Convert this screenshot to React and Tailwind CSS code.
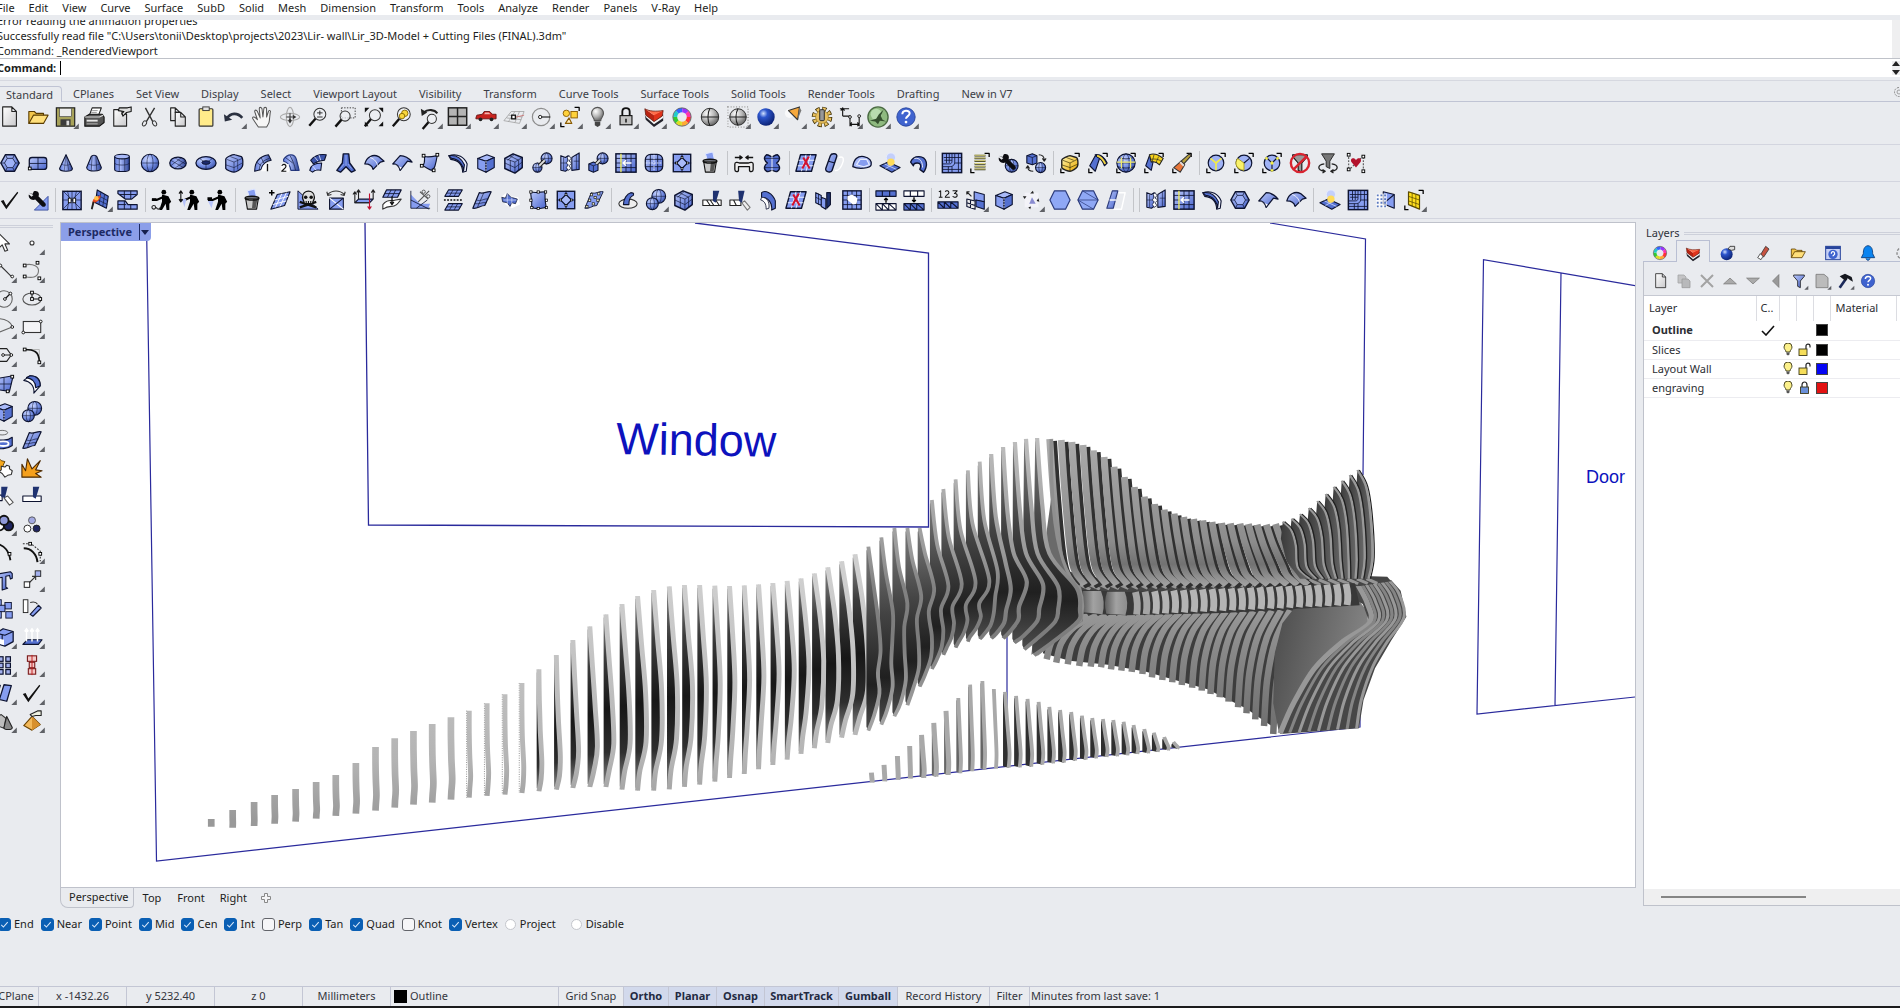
import React from "react";

const K = "#0d1330";
const BL = "#869df0";
const BM = "#5470d0";

/* ---------- shared gradients ---------- */
function Defs() {
  return (
    <svg width="0" height="0" className="absolute" aria-hidden="true">
      <defs>
        <linearGradient id="gb" x1="0" y1="0" x2="1" y2="1">
          <stop offset="0" stopColor="#bccafb" />
          <stop offset="1" stopColor="#4763cc" />
        </linearGradient>
        <linearGradient id="gh" x1="0" y1="0" x2="1" y2="0">
          <stop offset="0" stopColor="#5f7bdc" />
          <stop offset="0.4" stopColor="#a5b7f7" />
          <stop offset="1" stopColor="#2c4296" />
        </linearGradient>
        <radialGradient id="rb" cx="0.35" cy="0.3" r="0.8">
          <stop offset="0" stopColor="#cdd8ff" />
          <stop offset="0.5" stopColor="#7a94e8" />
          <stop offset="1" stopColor="#32489e" />
        </radialGradient>
        <radialGradient id="rd" cx="0.35" cy="0.3" r="0.8">
          <stop offset="0" stopColor="#cfe0ff" />
          <stop offset="0.3" stopColor="#2c55cc" />
          <stop offset="1" stopColor="#071a66" />
        </radialGradient>
        <radialGradient id="rg" cx="0.35" cy="0.3" r="0.8">
          <stop offset="0" stopColor="#ffffff" />
          <stop offset="0.5" stopColor="#b5b5b5" />
          <stop offset="1" stopColor="#555555" />
        </radialGradient>
        <linearGradient id="gy" x1="0" y1="0" x2="1" y2="1">
          <stop offset="0" stopColor="#fff6b0" />
          <stop offset="1" stopColor="#e8a800" />
        </linearGradient>
        <linearGradient id="gp" x1="0" y1="0" x2="1" y2="1">
          <stop offset="0" stopColor="#ffffff" />
          <stop offset="1" stopColor="#c9c9cc" />
        </linearGradient>
      </defs>
    </svg>
  );
}

const P = ({ d, f = "none", s = K, w = 1.2, ...r }) => (
  <path d={d} fill={f} stroke={s} strokeWidth={w} strokeLinejoin="round" {...r} />
);
const Sq = ({ x, y }) => <rect x={x - 1.5} y={y - 1.5} width="3" height="3" fill="#fff" stroke="#000" />;
const Br = () => <P d="M17 1.5h5v4M2 18v4.500h4" s="#000" w={1.4} />;

const ball = (cx, cy, r, f = "url(#rb)") => (
  <>
    <circle cx={cx} cy={cy} r={r} fill={f} stroke={K} strokeWidth="1.2" />
    <ellipse cx={cx} cy={cy} rx={r * 0.35} ry={r} fill="none" stroke={K} strokeWidth="0.6" />
    <path d={`M${cx - r} ${cy}h${2 * r}`} stroke={K} strokeWidth="0.6" />
  </>
);
const cube = (f = BL, g = "#a9baf8", h = BM) => (
  <>
    <P d="M3 7l10-4 8 3-9 4z" f={g} />
    <P d="M3 7l9 3v12l-9-4z" f={f} />
    <P d="M12 10l9-4v11l-9 5z" f={h} />
  </>
);
const lens = (x = 14, y = 9, r = 6) => (
  <>
    <P d={`M${x - r * 0.7} ${y + r * 0.7}L${x - r - 5} ${y + r + 6}`} s="#111" w={2.6} />
    <circle cx={x} cy={y} r={r} fill="#eef1f5" fillOpacity="0.7" stroke="#333" strokeWidth="1.1" />
  </>
);
const wrench = (
  <path d="M2 4l4 1.500 1.500-3C12 1 14 5 12.500 8l7 7c3 3-1 6-3.500 3.500l-7-7C5 13 1 10 2 6l3 2.500 2-2z" fill="#0c0c10" />
);
const bin = (
  <>
    <P d="M7 2l8-2 2 9H9z" f={BL} s="#dfe6ff" />
    <P d="M5 10h14l-2 12H7z" f="#c9c9c9" s="#111" />
    <path d="M13 11h5l-2 10h-4z" fill="#555" />
    <ellipse cx="12" cy="10" rx="7.500" ry="2" fill="none" stroke="#111" strokeWidth="1.600" />
  </>
);
const worker = (
  <>
    <circle cx="14" cy="3.500" r="2.600" fill="#000" />
    <path d="M12 6l7 2 3 6-2 2v7h-3l-1-7-4 7H9l3-9z" fill="#000" />
    <P d="M13 9L6 12H1" s="#000" w={2.2} />
  </>
);
const page = (x = 4, y = 1, w = 15, h = 21) => (
  <P d={`M${x} ${y}h${w - 5}l5 5v${h - 5}H${x}zM${x + w - 5} ${y}v5h5`} f="url(#gp)" s="#222" />
);
const funnel = (f) => <P d="M4 3h16v2l-6 7v10l-4-2v-8L4 5z" f={f} s="#111" />;

const ICONS = {
  new: page(),
  open: (
    <>
      <P d="M2 19V6h6l2 2h8v3" f="#f3c64a" s="#5a3c00" />
      <P d="M2 19l5-9h16l-5 9z" f="#ffdf7a" s="#5a3c00" />
    </>
  ),
  save: (
    <>
      <rect x="1.500" y="2" width="20" height="20" fill="#a7a25a" stroke="#222" strokeWidth="1.300" />
      <rect x="5" y="2.500" width="13" height="9" fill="#ececec" stroke="#444" strokeWidth="0.700" />
      <rect x="6" y="14.500" width="11" height="7" fill="#3c3c3c" />
      <rect x="12.500" y="16" width="3" height="5" fill="#ddd" />
    </>
  ),
  print: (
    <>
      <P d="M7 10l3-8h10l-3 8z" f="#fff" s="#222" />
      <P d="M2 12l5-3h14l2 3v6l-5 4H2z" f="#555" s="#111" />
      <P d="M2 12h16l4-2" s="#ddd" />
      <path d="M4 15h12v2H4z" fill="#e8e8e8" />
      <path d="M4 19h12v1H4z" fill="#bbb" />
      <P d="M10 5h6M9 7h6" s="#777" w={0.8} />
    </>
  ),
  props: (
    <>
      {page(3, 4, 14, 18)}
      <P d="M9 2h9l4-1v5l-5 1-4 4-1-3 2-2-6-1z" f="#ddd" s="#111" />
    </>
  ),
  cut: (
    <>
      <P d="M7 2l8 15M17 2L8 17" s="#333" w={1.5} />
      <ellipse cx="6" cy="19" rx="2" ry="3" fill="none" stroke="#333" transform="rotate(30 6 19)" />
      <ellipse cx="17" cy="19" rx="2" ry="3" fill="none" stroke="#333" transform="rotate(-30 17 19)" />
    </>
  ),
  copy: (
    <>
      {page(4, 2, 10, 14)}
      {page(9, 7, 11, 15)}
    </>
  ),
  paste: (
    <>
      <rect x="4.500" y="3" width="15" height="19" rx="1" fill="#ffeb8a" stroke="#333" strokeWidth="1.300" />
      <rect x="8.500" y="1" width="7" height="4" fill="#e2e2e2" stroke="#333" />
    </>
  ),
  undo: (
    <>
      <P d="M4 14C8 7 16 7 21 13" s="#2b3140" w={2.8} />
      <path d="M1 9l1 8 8-2z" fill="#2b3140" />
    </>
  ),
  hand: (
    <P d="M8 23L2 14c-1-2 1-3 3-1l2 2L4 6c0-2 2-2 3 0l3 7L9 3c0-2 2-2 3 0l1 9 1-9c0-2 3-2 3 0v9l2-6c1-2 3-1 2 1l-1 9c0 3-2 5-3 7z" f="#f6f6f6" s="#555" w={1.1} />
  ),
  orbit: (
    <>
      <ellipse cx="12" cy="12" rx="10.500" ry="4" fill="none" stroke="#aaa" strokeWidth="1.200" />
      <ellipse cx="12" cy="12" rx="4" ry="10.500" fill="none" stroke="#aaa" strokeWidth="1.200" />
      <P d="M12 8v8M8 12h7" s="#333" w={1.100} />
      <path d="M15 9.500l4 2.500-4 2.500zM10 16l2-3 2 3-2 3z" fill="#333" />
    </>
  ),
  zoompm: (
    <>
      {lens(14, 9, 6.500)}
      <P d="M11 7.500h6M14 5v5M11 12h6" s="#222" w={1} />
    </>
  ),
  zoomwin: (
    <>
      <rect x="7" y="2" width="15" height="11" fill="none" stroke="#333" strokeDasharray="1.500 1.500" />
      {lens(11, 11, 5.500)}
    </>
  ),
  zoomext: (
    <>
      {lens(13, 10, 6)}
      <path d="M2 2h5L2 7zM22 2h-5l5 5zM22 22h-5l5-5zM2 22v-5l4 5z" fill="#111" />
    </>
  ),
  zoomsel: (
    <>
      {lens(14, 9, 7)}
      <circle cx="15" cy="8" r="3.500" fill="#f8d63c" stroke="#8a6a00" />
      <circle cx="12" cy="11" r="3" fill="#f8d63c" stroke="#8a6a00" />
    </>
  ),
  zoomundo: (
    <>
      {lens(14, 14, 5)}
      <P d="M5 7c5-4 12-3 15 1" s="#222" w={2.200} />
      <path d="M2 3l1 8 6-4z" fill="#222" />
    </>
  ),
  views: (
    <>
      <rect x="1.500" y="2" width="20" height="19" fill="#b4b4b4" stroke="#222" strokeWidth="1.600" />
      <path d="M11.500 2v19M1.500 11.500h20" stroke="#222" strokeWidth="1.600" />
    </>
  ),
  car: (
    <>
      <P d="M1 13l1-3 6-1 2-3h6l3 3h4v5H1z" f="#c8231f" s="#5c0a0a" w={0.9} />
      <path d="M11 7h4l2 2h-7z" fill="#f4b5b0" />
      <circle cx="6" cy="14.500" r="2" fill="#222" />
      <circle cx="18" cy="14.500" r="2" fill="#222" />
    </>
  ),
  cplane: (
    <>
      <P d="M1 16L9 6h14l-5 13zM4 13l16 2M6 10l15 2M6 17l7-11M13 18l5-12" s="#9a9a9a" w={0.8} />
      <P d="M11 13l12-3" s="#c77" w={1} />
      <rect x="9.500" y="10" width="4" height="4" fill="#fff" stroke="#111" strokeWidth="1.400" />
    </>
  ),
  circ: (
    <>
      <circle cx="11" cy="12" r="9.500" fill="none" stroke="#8d8d8d" strokeWidth="1.300" />
      <P d="M11 12h10" s="#111" />
      <circle cx="10" cy="12" r="1.800" fill="#fff" stroke="#111" />
    </>
  ),
  sel: (
    <>
      <Br />
      <circle cx="8" cy="8" r="3.500" fill="#ffd23c" stroke="#8a5a00" />
      <rect x="13" y="6" width="7" height="7" fill="#ffd23c" stroke="#8a5a00" />
      <P d="M7 19l4-6 3 6z" f="#ffeec0" s="#8a5a00" />
    </>
  ),
  bulb: (
    <>
      <P d="M8 16c0-3-3-4-3-8a6.500 6.500 0 0 1 13 0c0 4-3 5-3 8z" f="url(#rg)" s="#555" />
      <path d="M8.500 17h6v4l-3 2-3-2z" fill="#444" />
    </>
  ),
  lock: (
    <>
      <P d="M8 11V6c0-5 8-5 8 0v5" s="#111" w={2} />
      <rect x="5.500" y="10.500" width="13" height="10" fill="#c2c2c2" stroke="#111" strokeWidth="1.200" />
      <path d="M12 14v4" stroke="#111" strokeWidth="1.600" />
    </>
  ),
  layer: (
    <>
      <path d="M2 10l1 5 9 8 10-7V9l-10 8z" fill="#23232c" />
      <path d="M2 8l10 9 10-7v3l-10 7-9-8z" fill="#f3f3f3" />
      <path d="M2 3l1 7 9 7V10z" fill="#b82412" />
      <path d="M12 9l10-4-1 6-9 6z" fill="#e0341c" />
      <path d="M2 3c5 3 12 3 20 2l-10 5z" fill="#ff6f4c" />
      <P d="M2 3c5 3 12 3 20 2l-1 6-9 6-9-7z" s="#5a140a" w={0.800} />
    </>
  ),
  wheel: (
    <>
      {["#f33", "#fa3", "#dd2", "#3c3", "#2cc", "#36f", "#93f", "#f3a"].map((c, i) => (
        <circle key={c} cx="12" cy="12" r="7.500" fill="none" stroke={c} strokeWidth="4.500" strokeDasharray="5.900 41.300" strokeDashoffset={-5.9 * i} />
      ))}
      <circle cx="12" cy="12" r="10" fill="none" stroke="#444" strokeWidth="0.800" />
    </>
  ),
  sphereg: (
    <>
      <circle cx="12" cy="12" r="9.500" fill="url(#rg)" stroke="#222" />
      <path d="M2.500 12h19M12 2.500c-3 5-3 14 0 19" stroke="#222" strokeWidth="1.200" fill="none" />
    </>
  ),
  spheredot: (
    <>
      <rect x="1" y="1" width="22" height="22" fill="none" stroke="#aaa" strokeWidth="2" strokeDasharray="1 2" />
      <circle cx="12" cy="12" r="9" fill="url(#rg)" stroke="#222" />
      <path d="M3 12h18M12 3c-3 5-3 13 0 18" stroke="#222" strokeWidth="1.200" fill="none" />
    </>
  ),
  sphereb: <circle cx="12" cy="12" r="9.500" fill="url(#rd)" />,
  spot: (
    <>
      <circle cx="7" cy="8" r="5" fill="#fff" opacity="0.700" />
      <P d="M6 5l12-4-2 14z" f="#f6a83c" s="#333" />
      <path d="M18 1l2 4-4 10z" fill="#777" />
    </>
  ),
  gear: (
    <>
      <circle cx="12" cy="12" r="8.500" fill="none" stroke="#3c2c00" strokeWidth="5.500" strokeDasharray="4.200 2.480" />
      <circle cx="12" cy="12" r="8.500" fill="none" stroke="#e8c060" strokeWidth="3.600" strokeDasharray="3 3.680" strokeDashoffset="-0.600" />
      <circle cx="12" cy="12" r="7" fill="#e8c060" stroke="#8a6a10" strokeWidth="0.600" />
      <rect x="9.500" y="4" width="5" height="12" rx="1" fill="#999" stroke="#222" />
    </>
  ),
  dims: (
    <>
      <P d="M4 2v9M1 3h10M4 11h8v8M12 17v5M22 12v10M12 20h10M2 5l2-3 2 3M14 18l-2 2 2 2M20 18l2 2-2 2" s="#111" />
      <circle cx="22" cy="11" r="1.500" fill="#fff" stroke="#111" />
      <circle cx="12" cy="12" r="1.500" fill="#fff" stroke="#111" />
    </>
  ),
  earth: (
    <>
      <circle cx="12" cy="12" r="11" fill="#8fba80" stroke="#4a6a42" strokeWidth="1.500" />
      <circle cx="10" cy="9" r="6" fill="#b8dcae" />
      <path d="M3 16l7-2 3-5 5-5-3 7 2 4 4 2-7-1-2 4-3-3z" fill="#35502f" />
    </>
  ),
  help: (
    <>
      <circle cx="12" cy="12" r="10" fill="#3f63cf" stroke="#28459c" />
      <P d="M8 9c0-5 8-5 8-1 0 3-4 3-4 6" s="#fff" w={2.200} />
      <circle cx="12" cy="17.500" r="1.500" fill="#fff" />
    </>
  ),
  hex3: (
    <>
      <P d="M7 3h10l5 9-5 9H7l-5-9z" f="url(#gb)" w={1.600} />
      <P d="M9 7h6l3 5-3 5H9l-3-5zM7 3l2 4M17 3l-2 4M22 12h-4M17 21l-2-4M7 21l2-4M2 12h4" f="#9fb2f7" w={0.800} />
    </>
  ),
  rrect: (
    <>
      <rect x="2.500" y="6" width="19" height="13" rx="3" fill="url(#gb)" stroke={K} strokeWidth="1.400" />
      <path d="M12 6v13M2.500 12.500h19" stroke={K} strokeWidth="0.900" />
      <Sq x={3} y={18} />
    </>
  ),
  cone: (
    <>
      <P d="M12 3l7 15c0 4-14 4-14 0z" f="url(#gh)" />
      <P d="M12 3l-2 18M12 3l3 17M7 13c2 2 8 2 10 0" w={0.500} />
    </>
  ),
  cone2: (
    <>
      <P d="M9 5c1-2 5-2 6 0l5 12c0 5-16 5-16 0z" f="url(#gh)" />
      <P d="M10 4L9 20M14 4l1 16M6 13c3 2 9 2 12 0" w={0.600} />
    </>
  ),
  cyl: (
    <>
      <P d="M4 5v14c0 3 16 3 16 0V5" f="url(#gh)" />
      <ellipse cx="12" cy="5" rx="8" ry="2.500" fill="#a9baf8" stroke={K} strokeWidth="1.200" />
      <P d="M4 12c0 3 16 3 16 0M9 7v14M15 7v14" w={0.600} />
    </>
  ),
  sphere: ball(12, 12, 9.500),
  ellip: (
    <>
      <ellipse cx="12" cy="12" rx="9" ry="6.500" fill="url(#gh)" stroke={K} strokeWidth="1.400" />
      <P d="M4 9l14 8M8 6l12 7M4 15L16 6M8 18l12-8" w={0.600} />
    </>
  ),
  torus: (
    <>
      <ellipse cx="12" cy="12" rx="11" ry="7" fill="url(#rb)" stroke={K} strokeWidth="1.400" />
      <ellipse cx="12" cy="11.500" rx="4.500" ry="2" fill="#1c2b6e" stroke={K} />
      <P d="M12 14v5M5 7l4 3M19 7l-4 3" w={0.600} />
    </>
  ),
  rbox: (
    <>
      <P d="M3 8c0-2 8-6 10-5l7 2c2 1 2 9 1 11-1 3-7 6-9 6s-8-2-9-4z" f="url(#gb)" w={1.400} />
      <P d="M4 8l8 3 9-4M12 11v11M8 5l8 3v11M3 14l9 3 9-5" w={0.600} />
    </>
  ),
  pipe1: (
    <>
      <P d="M4 21C4 12 8 5 19 3l3 6c-8 1-10 6-11 10z" f="url(#gh)" />
      <P d="M9 20c0-8 5-11 11-13M6 11l5 4M11 6l3 6" w={0.700} />
      <path d="M11 21c1-6 4-9 9-9v9z" fill="#fff" opacity="0.800" />
      <path d="M18 13v8" stroke="#111" strokeWidth="1.500" />
    </>
  ),
  pipe2: (
    <>
      <P d="M5 8c4-6 12-7 14 0l3 12H13C12 13 9 11 5 10z" f="url(#gh)" s="#26397f" />
      <P d="M12 4c3 5 5 10 6 16M7 6l8 6" w={0.700} />
      <path d="M2 13h9v9H2z" fill="#fff" opacity="0.800" />
      <P d="M3 15c2-3 6-1 4 2l-4 4h5" s="#111" w={1.300} />
    </>
  ),
  strips: (
    <>
      <P d="M4 9C9 3 14 2 21 3l-2 6c-5 0-9 2-12 4z" f="#3b53a8" />
      <P d="M3 20c1-6 5-8 13-8l-1 8c-4-1-7 0-9 2z" f={BL} />
      <P d="M8 5l4 5M13 3l2 6M6 15l4 5" s="#dfe6ff" w={0.900} />
    </>
  ),
  ypipe: (
    <>
      <P d="M9 2h6l1 10 6 8-4 2-6-6-6 6-4-2 6-8z" f={BM} w={1.500} />
      <P d="M12 3v12M6 18l4-5M18 18l-4-5" s="#a9baf8" w={0.800} />
    </>
  ),
  bent: (
    <>
      <P d="M2 13C4 5 11 2 17 5l6 5-4 1-8 8c-1-4-4-6-9-6z" f="url(#gb)" w={1.400} />
      <P d="M8 6c5 2 7 5 8 9" s="#fff" w={0.900} />
    </>
  ),
  bent2: (
    <>
      <P d="M2 13L10 4c5 0 9 2 13 7l-5-1-8 10c-1-4-3-7-8-7z" f="url(#gb)" w={1.400} />
      <P d="M2 13c5 0 7 3 8 7l2-3" f="#fff" w={0.900} />
    </>
  ),
  quad: (
    <>
      <P d="M6 5c5 1 9 0 14-1-2 7-1 11-5 16-4 0-6-3-11-5 3-3 2-6 2-10z" f="url(#gb)" />
      <Sq x={5} y={4} />
      <Sq x={20} y={3} />
      <Sq x={16} y={20} />
      <Sq x={3} y={15} />
    </>
  ),
  strip: (
    <>
      <P d="M2 4c10-3 17 2 20 9l-1 8-4 1c0-8-4-13-13-14z" f="#eef1ff" w={1.200} />
      <P d="M2 4c8-1 14 3 17 10l-1 7c0-7-5-13-13-14z" f={BM} w={1.200} />
    </>
  ),
  box: (
    <>
      {cube()}
      <path d="M12 10v11" stroke="#fff" strokeDasharray="1.500 1.500" />
    </>
  ),
  meshbox: (
    <>
      <P d="M2 7l9-5 10 4v11l-8 6-11-5z" f="url(#gb)" w={1.600} />
      <P d="M2 7l11 4 8-5M13 11v12M7 4l10 5v11M8 9v12M2 12l11 5 8-6M12 3l-7 6" w={0.700} />
    </>
  ),
  balls: (
    <>
      {ball(17, 7, 6)}
      {ball(7, 17, 5)}
      <path d="M9 15l6-6" stroke="#222" strokeWidth="4.500" />
      <path d="M9 15l6-6" stroke="#ddd" strokeWidth="2" />
    </>
  ),
  bridge: (
    <>
      <P d="M2 4l5 2 3-2v15l-3 2-5-1z" f="url(#gb)" />
      <P d="M22 1l-5 3-3 2v14l8-1z" f="url(#gb)" />
      <path d="M9 6l2-2 2 3-2 3 3 2-3 3 2 3-3 2-2-3 2-3-2-2 2-3z" fill="#fff" stroke={K} strokeWidth="0.800" />
      <P d="M2 12h6M16 10h6M19 3v16M5 6v14" w={0.600} />
    </>
  ),
  boxball: (
    <>
      {ball(17, 7, 6)}
      <P d="M2 13l5-2 5 2v7l-5 2-5-2z" f={BM} />
      <P d="M2 13l5 2 5-2M7 15v7" w={0.800} />
      <path d="M10 13l4-4" stroke="#222" strokeWidth="4" />
      <path d="M10 13l4-4" stroke="#ddd" strokeWidth="2" />
    </>
  ),
  gridarrow: (
    <>
      <rect x="1" y="2" width="22" height="20" fill="url(#gb)" stroke={K} strokeWidth="1.600" />
      <path d="M12 2v20M17.500 2v20M1 7h22M1 17h22M1 12h6" stroke={K} strokeWidth="0.900" />
      <path d="M6.500 2v20" stroke="#f4f05a" strokeWidth="1.400" />
      <path d="M18 12H9m3-3l-3 3 3 3" fill="none" stroke="#fff" strokeWidth="1.700" />
    </>
  ),
  rgrid: (
    <>
      <rect x="2.500" y="2.500" width="19" height="19" rx="6" fill="url(#gb)" stroke={K} strokeWidth="1.400" />
      <path d="M8 3v18M16 3v18M3 8h18M3 16h18" stroke={K} strokeWidth="0.900" />
      <path d="M12 3v18M3 12h18" stroke="#e7ecff" strokeWidth="1" strokeDasharray="2 1" />
    </>
  ),
  dia: (
    <>
      <rect x="2.500" y="2.500" width="19" height="19" fill={BL} stroke={K} strokeWidth="1.500" />
      <P d="M12 6l6 6-6 6-6-6zM12 2v3M12 19v3M2 12h3M19 12h3" f="#a9baf8" />
      {[[12, 6], [18, 12], [12, 18], [6, 12]].map(([x, y]) => (
        <rect key={`${x}-${y}`} x={x - 1} y={y - 1} width="2" height="2" fill="#fff" stroke="#000" strokeWidth="0.800" />
      ))}
    </>
  ),
  bin,
  comp: (
    <>
      <P d="M2 6h7M22 6h-7M7 4l3 2-3 2M17 4l-3 2 3 2" s="#111" w={1.500} />
      <P d="M2 13c0-2 3-2 5-1h10c2-1 5-1 5 1v6c0 3-4 3-4 1v-4H6v4c0 2-4 2-4-1z" f="#eee" s="#111" w={1.400} />
    </>
  ),
  peanut: (
    <>
      <P d="M6 3c3 0 4 2 6 2s3-2 6-2c4 3 2 7-1 9 3 2 5 6 1 9-3 1-4-1-6-1s-3 2-6 1c-4-3-2-7 1-9-3-2-5-6-1-9z" f={BM} w={1.500} />
      <path d="M12 1v22" stroke="#fff" />
      <P d="M4 7h16M4 17h16" w={0.700} />
    </>
  ),
  gridx: (
    <>
      <P d="M6 3h17l-5 18H1z" f={BL} w={1.500} />
      <P d="M4 9h17M3 15h17M12 3L7 21M17 3l-5 18" s="#fff" w={0.900} />
      <P d="M9 6l7 12M15 5L8 18" s="#d3122c" w={2.200} />
    </>
  ),
  caps: (
    <>
      <P d="M17 6c6-2 6 2 4 7s-4 8-8 7" s="#fff" w={1.500} />
      <P d="M8 4c1-3 8-3 7 1l-5 15c-1 3-8 2-7-2z" f="url(#gb)" w={1.500} />
      <P d="M6 10l7 2" />
    </>
  ),
  blob: (
    <>
      <P d="M2 16C3 8 7 4 14 5c6 1 9 5 8 9-1 4-14 5-20 2z" f="#a9baf8" w={1.400} />
      <P d="M6 14l4-6 7 0 3 6-6 2z" f={BL} s="#e7ecff" />
    </>
  ),
  sheetball: (
    <>
      <P d="M1 15l9-4 13 6-9 5z" f={BM} />
      <P d="M6 13l13 6M16 13l-9 5" s="#dfe6ff" w={0.800} />
      <circle cx="13" cy="6" r="5" fill="#c3cffb" stroke="#e6ebff" />
      <circle cx="13" cy="11" r="4" fill="#ffdc5a" />
    </>
  ),
  half: (
    <>
      <P d="M4 11C7 3 19 3 21 11c1 4-1 9-3 11l-4-3c2-4 1-7-3-7-2 0-4 1-4 3z" f={BM} w={1.500} />
      <P d="M8 7c6-1 9 3 9 10" s="#fff" w={0.900} />
    </>
  ),
  meshc: (
    <>
      <rect x="1.500" y="1.500" width="21" height="21" fill={BL} stroke={K} strokeWidth="1.600" />
      <P d="M12 2v8c0 2-1 3-3 3H2M15 2v9c0 3-2 5-5 5H2M19 2v20M2 19h20M9 2v10M6 2v10M3.500 9H12M3 6h9M15 12h8M12 16v6M8 16v6M12 6h11" w={0.900} />
    </>
  ),
  list: (
    <>
      <Br />
      <path d="M6 4h12M6 7h12M6 10h12M6 13h12M6 16h12M6 19h12" stroke="#33331a" strokeWidth="2" />
      <path d="M6 3.500h12M6 6.500h12M6 9.500h12M6 12.500h12M6 15.500h12M6 18.500h12" stroke="#f6ef8e" strokeWidth="1" />
    </>
  ),
  wball: (
    <>
      {ball(16, 15, 7)}
      {wrench}
    </>
  ),
  swap: (
    <>
      <P d="M2 4l6-2 5 2v8l-5 2-6-2z" f={BM} />
      <P d="M2 4l6 2 5-2M8 6v8" w={0.800} />
      {ball(17, 17, 5.500)}
      <P d="M15 3c4 0 6 2 6 6M9 21c-4 0-6-1-6-5M19 7l2 3 2-3M1 18l2-3 2 3" s="#222" />
    </>
  ),
  ybox: (
    <>
      <Br />
      <P d="M3 9c0-2 7-5 9-5l7 2c2 1 2 8 1 10s-6 5-8 5-8-2-9-4z" f="url(#gy)" s="#222" w={1.500} />
      <P d="M4 9l8 3 8-4M12 12v9M8 6l8 3M3 14l9 3 9-4" s="#332a00" w={0.700} />
    </>
  ),
  ybent: (
    <>
      <Br />
      <P d="M3 15L9 4l5 2-5 15z" f={BM} />
      <P d="M9 3c6-1 10 3 13 9l-3 3c-2-5-4-8-7-9z" f="#222b4a" />
      <path d="M11 4c4 1 7 5 9 9" stroke="#f6d840" strokeWidth="2" fill="none" />
    </>
  ),
  yball: (
    <>
      {ball(12, 12, 10)}
      <P d="M4 6c5 2 11 2 16 0M3 16c5 2 13 2 18 0" w={0.800} />
      <path d="M2 11h20M7 6v12M17 6v12" stroke="#f0ea70" strokeWidth="1.300" fill="none" />
      <Br />
    </>
  ),
  yflag: (
    <>
      <Br />
      <P d="M3 15L7 4l5 2-3 14z" f={BM} />
      <P d="M7 3c5-2 10 0 15 4l-4 7c-3-3-6-4-9-3z" f="#f6d21c" s="#222" />
      <P d="M12 3l-2 8M17 5l-3 7M8 8c5-1 9 0 12 2" s="#222" w={0.700} />
    </>
  ),
  brush: (
    <>
      <Br />
      <P d="M20 2l2 2-8 9-3-3z" f="#b9a23c" s="#333" />
      <P d="M11 10l4 4-5 8-7-5z" f="#e8763a" s="#333" />
      <P d="M10 11l4 4" s="#ddd" w={2} />
    </>
  ),
  yc1: (
    <>
      <Br />
      <circle cx="12" cy="12" r="8.500" fill="#9fb2f5" stroke={K} strokeWidth="1.300" />
      <path d="M12 20v-8L6 7M12 12l6-5" stroke="#f2ec4a" strokeWidth="1.800" fill="none" />
    </>
  ),
  yc2: (
    <>
      <Br />
      <circle cx="12" cy="12" r="8.500" fill="#9fb2f5" stroke={K} strokeWidth="1.300" />
      <path d="M12 20v-8L5 7c-4 6-1 12 7 13z" fill="#f9f26a" stroke="#a89a20" />
      <P d="M12 12l6-5" />
    </>
  ),
  yc3: (
    <>
      <Br />
      <circle cx="12" cy="12" r="8.500" fill="#9fb2f5" stroke={K} strokeWidth="1.300" />
      <P d="M12 20v-8L6 6M12 12l6-6" />
      <circle cx="12" cy="12" r="1.800" fill="#f2ec4a" />
      <circle cx="6" cy="7" r="1.500" fill="#f2ec4a" />
      <circle cx="18" cy="7" r="1.500" fill="#f2ec4a" />
      <circle cx="12" cy="20" r="1.500" fill="#f2ec4a" />
    </>
  ),
  nofilter: (
    <>
      {funnel("#999")}
      <circle cx="12" cy="12" r="10" fill="none" stroke="#d8232f" strokeWidth="2.600" />
      <path d="M5 19L19 5" stroke="#d8232f" strokeWidth="2.600" />
    </>
  ),
  loop: (
    <>
      <path d="M5 2h14l-5 8v8l-4-2v-6z" fill="#777" stroke="#222" />
      <P d="M8 13c-8 1-8 7 0 8M16 13c8 1 8 7 0 8M6 19l3 2-3 2M18 19l-3 2 3 2" s="#222" w={1.400} />
    </>
  ),
  heart: (
    <>
      <P d="M4 2v18L20 4v18" s="#555" strokeDasharray="2 1.500" />
      <path d="M12 17l-5-6c-2-4 3-6 5-2 2-4 7-2 5 2z" fill="#b3122c" />
      <Sq x={4} y={3} />
      <Sq x={4} y={19} />
      <Sq x={20} y={5} />
      <Sq x={20} y={21} />
    </>
  ),
  check: <path d="M2 13l3-1 3 6L20 3l1 1L8 22z" fill="#111" />,
  wtri: (
    <>
      <path d="M23 8v15H8z" fill={BL} stroke="#3a4fa0" />
      {wrench}
    </>
  ),
  pinch: (
    <>
      <rect x="2" y="2.500" width="20" height="20" fill={BL} stroke={K} strokeWidth="1.500" />
      <P d="M12 2v20M2 12h6M16 12h6M7 2l2 8-2 12M17 2l-2 8 2 12M2 2l20 20M22 2L2 22" w={0.700} />
      <rect x="8" y="10" width="3" height="5" fill="#fff" stroke="#111" />
      <rect x="13" y="10" width="3" height="5" fill="#fff" stroke="#111" />
    </>
  ),
  torch: (
    <>
      <P d="M9 1l12 7-2 13-12-6z" f={BM} />
      <P d="M13 3l-2 14M17 6l-2 13M8 6l13 7M8 11l12 6" w={0.700} />
      <path d="M3 21l1-8c1-4 6-5 9-6-1 4-3 7-7 8z" fill="#e8481c" />
      <circle cx="8" cy="10" r="2.500" fill="#ffc04a" />
      <P d="M3 22l2-8" w={2} s="#222" />
    </>
  ),
  gridcut: (
    <>
      <P d="M1 2h21v4l-6 5H9L1 5zM1 22h21v-5H12l-3-4H1z" f={BL} w={1.300} />
      <P d="M8 2v8M15 2v9M3 6h18M8 13v9M15 17v5M1 17h9" w={1} />
    </>
  ),
  work1: (
    <>
      {worker}
      <rect x="1" y="10" width="5" height="3" fill="#000" />
      <P d="M1 20a2 2 0 1 0 4 0a2 2 0 1 0-4 0M6 20a2 2 0 1 0 4 0" s="#222" />
    </>
  ),
  work2: (
    <>
      {worker}
      <path d="M3 11h5l-2 9z" fill="#b6c3fa" />
      <P d="M2 2v12M0 5l2-3 2 3M0 11l2 3 2-3" s="#111" />
    </>
  ),
  work3: (
    <>
      {worker}
      <path d="M1 13h6l-2 8z" fill="#b6c3fa" />
      <rect x="0.500" y="9" width="5" height="3" fill="#000" />
    </>
  ),
  addgrid: (
    <>
      <P d="M9 6l14-3-6 15-15 4z" f={BL} />
      <P d="M14 5L7 20M19 4l-7 15M6 12l15-4M4 17l15-4" s="#fff" w={1} />
      <P d="M3 1v6M0 4h6" s="#000" w={1.600} />
    </>
  ),
  skull: (
    <>
      <path d="M1 2v20h22z" fill={BL} stroke={K} />
      <P d="M3 20l18-6M3 14l18 6" s="#111" w={2.500} />
      <P d="M6 9c0-9 13-9 13 0 0 3-2 4-2 7h-9c0-3-2-4-2-7z" f="#ddd" s="#111" w={1.400} />
      <circle cx="9.500" cy="9" r="1.900" fill="#111" />
      <circle cx="15.500" cy="9" r="1.900" fill="#111" />
      <P d="M10 16v-3M12.500 16v-3M15 16v-3" s="#111" />
    </>
  ),
  rotbox: (
    <>
      <P d="M3 6c5-5 13-5 18 0M2 3l1 4 4-1M22 3l-1 4-4-1" s="#333" />
      <P d="M5 10h15v12H5z" f={BL} />
      <P d="M5 10l15 12" s="#fff" />
      <P d="M5 22L20 10" />
    </>
  ),
  arrows3: (
    <>
      <P d="M2 15l4-4h16l-4 4z" f={BL} />
      <P d="M2 15V4M6 11V2M22 11V2M0 6l2-3 2 3M4 4l2-3 2 3M20 4l2-3 2 3M2 15h16" s="#222" />
      <P d="M18 15v7M16 19l2 3 2-3M18 15V5" s="#c01030" w={1.200} />
    </>
  ),
  proj: (
    <>
      <P d="M6 1h16l-4 8H2z" f={BL} w={1.300} />
      <P d="M11 1L7 9M16 1l-4 8M4 5h16" w={0.900} />
      <P d="M2 17c6-7 8-3 14-5l6-1c-3 4-5 8-11 8-4 0-6 1-9 3z" f="#fff" s="#333" />
      <P d="M12 8v9M10 14l2 3 2-3" s="#111" w={1.400} />
    </>
  ),
  snipgrid: (
    <>
      <path d="M2 6l10 10h11l-2 5H2z" fill={BL} />
      <P d="M2 2v19h21M2 12l20 10M8 21l12-9" w={0.900} />
      <P d="M22 2L10 14M21 11L12 3" s="#555" w={1.200} />
      <circle cx="16" cy="3" r="1.800" fill="none" stroke="#555" />
      <circle cx="21" cy="8" r="1.800" fill="none" stroke="#555" />
    </>
  ),
  split: (
    <>
      <P d="M6 1h15l-4 7H2zM6 16h15l-4 7H2z" f={BL} />
      <P d="M11 1L7 8M16 1l-4 7M4 4.500h15M11 16l-4 7M16 16l-4 7M4 19.500h15" w={0.800} />
      <path d="M1 12h21" stroke="#111" strokeWidth="1.500" strokeDasharray="2 1.500" />
    </>
  ),
  sheet: (
    <>
      <P d="M9 4c5 2 8-2 13-1l-7 15c-5 0-8 4-13 3z" f="url(#gb)" w={1.300} />
      <P d="M14 4L7 20M6 12c5 2 8-2 13-1M4 16c5 1 8-2 13-1" w={0.700} />
    </>
  ),
  cross: (
    <>
      <path d="M2 9l6-5 5 4 8 1 2 8-9 4-7-4z" fill="#fff" />
      <P d="M3 9l4 1 2-5 4 4 7 2-2 5-4-1-2 4-3-4-5-1z" f={BM} w={0.800} />
      <P d="M9 5v12M14 9v8M5 12h14" s="#dfe6ff" w={0.700} />
    </>
  ),
  quad2: (
    <>
      <P d="M4 3c5 2 11 0 16 0-1 6 0 12 1 17-6 1-10 3-16 0 1-6-1-11-1-17z" f="url(#gb)" />
      {[[4, 3], [12, 3], [20, 3], [21, 12], [21, 20], [12, 21], [5, 20], [4, 12]].map(([x, y]) => (
        <rect key={`${x}-${y}`} x={x - 1} y={y - 1} width="2.500" height="2.500" fill="#fff" stroke="#000" strokeWidth="0.800" />
      ))}
    </>
  ),
  sheetdots: (
    <>
      <P d="M9 4c5 2 8-2 13-1l-7 15c-5 0-8 4-13 3z" f={BL} w={1} />
      {[[9, 6], [17, 5], [13, 9], [7, 12], [16, 12], [11, 16], [4, 19]].map(([x, y]) => (
        <rect key={`${x}-${y}`} x={x - 1} y={y - 1} width="2.500" height="2.500" fill="#f6f4d0" stroke="#222" strokeWidth="0.800" />
      ))}
    </>
  ),
  cowl: (
    <>
      <ellipse cx="12" cy="16" rx="10" ry="5" fill="#eee" stroke="#333" strokeWidth="1.200" />
      <P d="M7 17C7 11 11 5 15 4c4 0 4 3 1 4-3 2-3 5-3 9z" f={BM} w={1.200} />
    </>
  ),
  spheres: (
    <>
      {ball(15, 8, 7.500)}
      {ball(8, 16, 6.500)}
    </>
  ),
  cutbar: (
    <>
      <P d="M2 12h20v6H2zM6 12l4 6M10 12l4 6M16 12l4 6" f="#fff" s="#222" />
      <path d="M13 2h7l-4 13-3-2z" fill="#1f3270" />
    </>
  ),
  cutbar2: (
    <>
      <P d="M1 12h12v6H1zM5 12l3 6" f="#fff" s="#222" />
      <P d="M14 15l3-2 6 7-3 3z" f="#eee" s="#777" />
      <path d="M10 2h7l-3 13-3-2z" fill="#1f3270" />
    </>
  ),
  arcs: (
    <>
      <P d="M5 4c4-3 12 0 15 9v8l-4 2c1-8-4-14-11-14z" f={BM} />
      <P d="M5 9c6 0 9 5 8 12l-3 1c0-6-2-9-6-10z" f="#fff" w={0.900} />
    </>
  ),
  panels: (
    <>
      <P d="M3 4l6 3v11l-6-3zM9 9l5 2v11l-5-3z" f={BL} />
      <P d="M15 4h4v13l-4 4z" f="#1f3270" />
      <P d="M3 9l6 3M6 5v12" w={0.800} />
    </>
  ),
  ghole: (
    <>
      <rect x="2" y="2" width="20" height="20" fill={BL} stroke={K} strokeWidth="1.500" />
      <path d="M7 2v20M12 2v20M17 2v20M2 7h20M2 12h20M2 17h20" stroke={K} strokeWidth="0.900" />
      <path d="M7 8l5-2 6 4-1 6-4 1-6-5z" fill="#fff" />
    </>
  ),
  stk1: (
    <>
      <P d="M1 2h22v6H1zM8 2v6M16 2v6" f={BM} />
      <P d="M1 16h22v7H1zM1 16l7 7M8 16l7 7M15 16l8 7M8 16v7M15 16v7" f="#fff" />
      <P d="M12 15v-5M10 12l2-2 2 2" s="#000" w={1.500} />
    </>
  ),
  stk2: (
    <>
      <P d="M1 2h22v6H1zM8 2v6M16 2v6" f="#fff" />
      <P d="M1 16h22v7H1zM1 16l7 7M8 16l7 7M15 16l8 7M8 16v7M15 16v7" f={BM} />
      <P d="M12 9v5M10 12l2 2 2-2" s="#000" w={1.500} />
    </>
  ),
  n123: (
    <>
      <P d="M1 14h22v7H1zM1 14l7 7M8 14l7 7M15 14l8 7M8 14v7M15 14v7" f={BM} />
      <P d="M2 3l2-1v7M2 9h4M9 3c1-2 4-1 4 1s-4 3-4 5h5M17 2h5l-3 3c4 0 4 4 0 4l-2-1" s="#111" w={1.100} />
    </>
  ),
  grids: (
    <>
      <P d="M10 3l11 3v8l-11-2z" f={BL} />
      <P d="M12 12l9 2v8l-9-3z" f={BM} />
      <P d="M2 11l9 2v9l-9-3zM2 15l9 3M6 12v9" f="#eee" />
      <P d="M7 8L2 3M2 6V3h3" s="#222" />
    </>
  ),
  arr4: (
    <>
      <rect x="4" y="4" width="15" height="16" fill="#f3f3f8" />
      <path d="M9 16l3-7 4 7z" fill="#8a8cd0" />
      <path d="M10 5l3-3 1 3zM4 11l-2-3 4 0zM19 10l1 4-3-1zM8 20l3-1-1 3z" fill="#222" />
    </>
  ),
  hexf: <P d="M6 2h12l5 10-5 10H6L1 12z" f="#8fa8f5" s="#2b3a7a" w={1.300} />,
  hexl: (
    <>
      <P d="M6 2h12l5 10-5 10H6L1 12z" f="#8fa8f5" s="#2b3a7a" w={1.300} />
      <P d="M6 2l17 10M1 12h22M1 12l17 10" w={0.800} s="#2b3a7a" />
    </>
  ),
  card: (
    <>
      <P d="M15 4h7l-4 18H9" s="#fff" w={1.600} />
      <P d="M8 2h6L9 21H2z" f="url(#gb)" s="#2b3a7a" />
      <P d="M5 12h7" s="#fff" w={1.500} />
    </>
  ),
  dots: (
    <>
      <P d="M9 3l12 3v15l-12-5z" f={BL} />
      <P d="M9 16L21 6" />
      <path d="M1 5h12v16H1z" fill="#fff" opacity="0.700" />
      <path d="M3 6v15M7 6v15M11 6v15" stroke="#5b7ac0" strokeWidth="2" strokeDasharray="2 2" />
    </>
  ),
  ypanel: (
    <>
      <Br />
      <P d="M6 3l12 4v15L6 17z" f="#ffdf1c" s="#5a4a00" w={1.300} />
      <P d="M10 4v15M14 6v14M6 8l12 4M6 13l12 4" s="#5a4a00" w={0.800} />
    </>
  ),
  pointer: <P d="M6 1v17l4-4 3 7 3-1-3-7h5z" f="#fff" s="#333" />,
  dot: <circle cx="12" cy="12" r="2.200" fill="#fff" stroke="#333" strokeWidth="1.200" />,
  line: (
    <>
      <P d="M8 6l13 13" s="#333" />
      <circle cx="8" cy="6" r="1.500" fill="#fff" stroke="#111" />
      <circle cx="21" cy="18" r="1.500" fill="#fff" stroke="#111" />
    </>
  ),
  curve: (
    <>
      <P d="M4 18c8 2 14 1 15-5s-6-9-13-8" s="#777" />
      <Sq x={4} y={6} />
      <Sq x={4} y={18} />
      <Sq x={18} y={3} />
      <Sq x={20} y={20} />
    </>
  ),
  circr: (
    <>
      <circle cx="12" cy="12" r="9" fill="none" stroke="#666" strokeWidth="1.200" />
      <P d="M13 12l6-6" s="#111" />
      <circle cx="13" cy="12" r="1.500" fill="#fff" stroke="#111" />
      <circle cx="19" cy="6" r="1.500" fill="#fff" stroke="#111" />
    </>
  ),
  ellc: (
    <>
      <ellipse cx="12" cy="12" rx="10" ry="6.500" fill="none" stroke="#555" strokeWidth="1.200" />
      <P d="M12 6v6h9" s="#111" />
      <Sq x={12} y={5} />
      <Sq x={12} y={12} />
      <Sq x={21} y={12} />
    </>
  ),
  arc: (
    <>
      <P d="M6 3c8 0 14 4 15 9M21 12L6 18" s="#666" />
      <circle cx="21" cy="12" r="1.500" fill="#fff" stroke="#111" />
    </>
  ),
  rect: (
    <>
      <rect x="2.500" y="6" width="19" height="12" fill="#f4f4f6" stroke="#333" strokeWidth="1.200" />
      <circle cx="2.500" cy="18" r="1.500" fill="#fff" stroke="#111" />
      <circle cx="21.500" cy="6" r="1.500" fill="#fff" stroke="#111" />
    </>
  ),
  poly: (
    <>
      <P d="M6 5h9l5 7-5 7H6M11 12h9" s="#222" />
      <circle cx="11" cy="12" r="1.500" fill="#fff" stroke="#111" />
      <circle cx="20" cy="12" r="1.500" fill="#fff" stroke="#111" />
    </>
  ),
  fillet: (
    <>
      <P d="M4 6h16v13" s="#aaa" w={0.900} />
      <P d="M4 6c10 0 16 2 16 14" s="#111" w={1.800} />
      <Sq x={4} y={6} />
      <Sq x={20} y={20} />
    </>
  ),
  srf: (
    <>
      <P d="M4 6l18-3-4 17-14-2z" f="url(#gb)" />
      <P d="M12 5v14M4 12h16" w={0.800} />
      <Sq x={21} y={4} />
      <Sq x={16} y={20} />
    </>
  ),
  sweep: (
    <>
      <P d="M3 8l7-5c7 0 11 4 11 11l-7 8c1-8-4-13-11-14z" f="#fff" />
      <P d="M10 3c7 0 11 4 11 11l-5 2c0-6-4-10-10-11z" f={BM} />
    </>
  ),
  rings: (
    <>
      <ellipse cx="10" cy="4" rx="6" ry="2.500" fill="none" stroke="#666" />
      <P d="M2 10c5 3 14 3 19-1v9c-5 4-14 4-19 3z" f={BM} />
      <ellipse cx="11" cy="16" rx="6" ry="2.500" fill="none" stroke="#fff" strokeWidth="2" />
    </>
  ),
  puzzle: (
    <>
      <path d="M1 4l5-3 3 3 4 1-2 4 2 5-5 1-3-3-5 2z" fill="#f6a81c" stroke="#5a3c00" />
      <P d="M9 10l4 1 2-2 3 1v3l3 2-1 4-4 1-3 2-3-4-3-2 2-2z" f="#fff" s="#333" />
    </>
  ),
  burst: <P d="M1 22V8l4 7 2-13 5 11 9-9-5 10 7 1-7 3 6 4z" f="#f5a01c" s="#4a2800" />,
  trimr: (
    <>
      <P d="M2 11h8v6H2z" f="#fff" />
      <P d="M12 14l4-2 6 7-4 3z" f="#fff" s="#555" />
      <path d="M9 2h7l-3 12-4-1z" fill="#1f3270" />
    </>
  ),
  trim: (
    <>
      <P d="M2 12h20v6H2z" f="#fff" />
      <path d="M13 2h7l-4 13-3-2z" fill="#1f3270" />
    </>
  ),
  dots3: (
    <>
      <circle cx="7" cy="14" r="5" fill="#fff" stroke="#111" strokeWidth="2" />
      <circle cx="17" cy="14" r="5" fill="#1f2560" stroke="#111" strokeWidth="2" />
      <circle cx="12" cy="8" r="5" fill="#8f98d8" stroke="#111" strokeWidth="2" />
    </>
  ),
  dots3b: (
    <>
      <circle cx="7" cy="17" r="3.800" fill="#fff" stroke="#222" />
      <circle cx="17" cy="17" r="3.800" fill="#1f2560" stroke="#222" />
      <circle cx="12" cy="8" r="3.800" fill="#a3a9e2" stroke="#555" />
    </>
  ),
  crv1: (
    <>
      <P d="M5 3c8 3 12 7 14 18" s="#111" w={2} />
      <Sq x={18} y={14} />
    </>
  ),
  crv2: (
    <>
      <P d="M3 8c8 0 14 6 15 15" s="#111" w={2.200} />
      <P d="M2 3h9l10 8v11" s="#333" strokeDasharray="2 1.500" />
      <Sq x={10} y={3} />
      <Sq x={21} y={14} />
    </>
  ),
  text: <P d="M2 6l17-3 2 2v5l-2 1-1-4-4 1v12l2 1-6 2V9L6 10l-1 4z" f="url(#gb)" />,
  move: (
    <>
      <P d="M9 15l7-7M12 8h4v4" s="#333" />
      <rect x="3.500" y="14" width="6" height="6" fill="#fff" stroke="#111" />
      <rect x="15.500" y="2" width="6" height="6" fill="#a3b0ee" stroke="#222" />
    </>
  ),
  copies: (
    <>
      {[[2, 3], [13, 6], [6, 9], [2, 16], [14, 16]].map(([x, y]) => (
        <rect key={`${x}-${y}`} x={x} y={y} width="7" height="7" fill={BL} stroke={K} />
      ))}
    </>
  ),
  rot: (
    <>
      <rect x="2.500" y="3" width="5" height="14" fill="#fff" stroke="#222" />
      <P d="M10 6c4-1 7 0 8 2" s="#333" />
      <P d="M10 19L19 9l3 3-9 9z" f={BL} />
    </>
  ),
  bool: (
    <>
      <P d="M3 8l8-5 11 3v11l-9 5-10-3z" f={BL} w={1.400} />
      <P d="M3 8l10 2 9-4M10 10v10" />
      <path d="M6 14l6 1v6l-6-2z" fill="#fff" />
    </>
  ),
  ext: (
    <>
      <P d="M2 20l5-5h16l-4 5z" f={BM} />
      <path d="M6 17V4M12 17V4M18 17V4M4 6l2-3 2 3M10 6l2-3 2 3M16 6l2-3 2 3" stroke="#fff" strokeWidth="1.600" fill="none" />
    </>
  ),
  arr: (
    <>
      {[3, 10, 17].map((y) => [6, 14].map((x) => (
        <rect key={`${x}-${y}`} x={x} y={y} width="5" height="5" fill="#a3b0ee" stroke={K} strokeWidth="1.300" />
      )))}
    </>
  ),
  align: (
    <>
      {[[7, 2, 10], [9, 9, 6], [8, 16, 8]].map(([x, y, w]) => (
        <rect key={y} x={x} y={y} width={w} height="6" fill="#f4c8c8" stroke="#7a1a1a" strokeWidth="1.200" />
      ))}
      <path d="M12 1v22" stroke="#c01818" />
    </>
  ),
  bend: (
    <>
      <P d="M12 3l8 1-5 17-8-2z" f={BL} w={1.400} />
      <P d="M4 18L8 3" w={1.400} />
    </>
  ),
  solids: (
    <>
      <P d="M2 8l7-3 5 4-2 11-10-4z" f="#bdbdbd" s="#333" />
      <P d="M15 7l6 12c0 3-9 3-9 0z" f="#8a8a8a" s="#222" />
    </>
  ),
  pyr: (
    <>
      <P d="M12 7l9 9-9 6-9-5z" f="#f3b95a" s="#6a4200" />
      <path d="M12 7v15l9-6z" fill="#d8902c" />
      <P d="M10 5l8-4h4v5h-6l-4 1z" f="#eef0e0" s="#222" />
    </>
  ),
  bomb: (
    <>
      <circle cx="10" cy="14" r="9" fill="url(#rd)" />
      <P d="M12 6l3-4h7v5l-5 1z" f="#ddd" s="#222" />
    </>
  ),
  tube: (
    <>
      <P d="M16 2l5 4-8 12-5-3z" f="#c65240" s="#333" />
      <P d="M8 13l4 4-3 5-5-3z" f="#fff" s="#333" />
    </>
  ),
  winhelp: (
    <>
      <rect x="1" y="2" width="22" height="20" fill="#c5d0f6" stroke="#28459c" strokeWidth="1.500" />
      <rect x="1" y="2" width="22" height="4" fill="#28459c" />
      <circle cx="12" cy="14" r="7" fill="#3f63cf" />
      <P d="M9.500 13c0-4 5-4 5 0 0 2-2.500 2-2.500 4" s="#fff" w={1.800} />
    </>
  ),
  bell: <P d="M12 1c6 1 7 6 7 12l3 6H2l3-6c0-6 1-11 7-12zM9 20c1 4 5 4 6 0" f="#0a84f0" s="#0a3a78" w={1.300} />,
  cog: (
    <>
      <circle cx="12" cy="12" r="9" fill="none" stroke="#888" strokeWidth="2" strokeDasharray="4 2.200" />
      <circle cx="12" cy="12" r="4" fill="none" stroke="#888" strokeWidth="1.500" />
    </>
  ),
  copyg: (
    <g opacity="0.600">
      <P d="M3 3h9l3 3v9H3z" f="#aaa" s="#777" />
      <P d="M9 9h9l3 3v10H9z" f="#999" s="#666" />
    </g>
  ),
  xg: <P d="M3 3l18 18M21 3L3 21" s="#a3a3a3" w={3} />,
  up: <P d="M1 17L12 7l11 10z" f="#aaa" s="#777" />,
  down: <P d="M1 7l11 10L23 7z" f="#aaa" s="#777" />,
  left: <P d="M17 1v22L6 12z" f="#999" s="#777" />,
  funnelb: funnel("url(#gb)"),
  pageg: <P d="M3 2h12l6 5v15H3z" f="#bbb" s="#777" />,
  hammer: (
    <>
      <P d="M14 8L4 22" s="#1c2a5c" w={4} />
      <path d="M4 5l8-4 10 5 2 7-4-2-4-3-3 4-4-3z" fill="#16181f" />
    </>
  ),
};

function Icon({ n, fly, size = "size-6" }) {
  return (
    <svg viewBox="0 0 24 24" className={`${size} shrink-0 overflow-visible`} aria-hidden="true">
      {ICONS[n]}
      {fly && <path d="M26 19v6h-6z" fill="#5f6166" />}
    </svg>
  );
}

function Tool({ name }) {
  if (name === "|") {
    return (
      <span className="flex w-[6px] shrink-0 justify-center">
        <span className="h-6 w-px bg-[#c3c5c9]" />
      </span>
    );
  }
  const fly = name.endsWith("*");
  const n = fly ? name.slice(0, -1) : name;
  return (
    <button type="button" aria-label={n} className="flex h-7 w-7 shrink-0 items-center justify-center">
      <Icon n={n} fly={fly} size="size-[22px]" />
    </button>
  );
}

const ROW1 = "new open save* print props cut copy paste undo* hand orbit zoompm zoomwin zoomext zoomsel zoomundo* views* car* cplane* circ* sel* bulb* lock* layer* wheel* sphereg spheredot* sphereb* spot* gear* dims* earth* help*".split(" ");
const ROW2 = "hex3 rrect cone cone2 cyl sphere ellip torus rbox pipe1 pipe2 strips ypipe bent bent2 quad strip box meshbox balls bridge boxball gridarrow rgrid dia bin | comp peanut | gridx caps blob sheetball half | meshc list wball swap | ybox ybent yball yflag brush | yc1 yc2 yc3 nofilter loop heart".split(" ");
const ROW3 = "check wtri | pinch torch* gridcut | work1 work2 work3 | bin addgrid skull rotbox arrows3 proj snipgrid | split sheet cross quad2 dia sheetdots | cowl spheres* meshbox cutbar cutbar2 arcs gridx panels ghole | stk1 stk2 | n123 grids* box arr4* hexf hexl card | | bridge gridarrow strip hex3 bent2 bent | sheetball meshc dots ypanel*".split(" ");
const SIDE = "pointer dot* line* curve* circr* ellc* arc* rect* poly* fillet* srf* sweep* box* spheres* rings* sheet* puzzle burst trimr trim dots3* dots3b crv1 crv2* text move* copies rot bool* ext* arr* align* bend* check* solids* pyr*".split(" ");

function ToolRow({ items, label, className }) {
  return (
    <div role="toolbar" aria-label={label} className={`flex overflow-hidden border-b border-[#d3d5df] ${className}`}>
      <div className="-ml-1 flex shrink-0 items-center">
        {items.map((t, i) => (
          <Tool key={i} name={t} />
        ))}
      </div>
    </div>
  );
}

/* ---------- 3D model ---------- */
function smooth(pts) {
  let d = `M${pts[0][0].toFixed(1)} ${pts[0][1].toFixed(1)}`;
  for (let i = 0; i < pts.length - 1; i++) {
    const a = pts[Math.max(0, i - 1)];
    const b = pts[i];
    const c = pts[i + 1];
    const e = pts[Math.min(pts.length - 1, i + 2)];
    d += `C${[
      b[0] + (c[0] - a[0]) / 6, b[1] + (c[1] - a[1]) / 6,
      c[0] - (e[0] - b[0]) / 6, c[1] - (e[1] - b[1]) / 6,
      c[0], c[1],
    ].map((v) => v.toFixed(1)).join(" ")}`;
  }
  return d;
}
function lerpKeys(keys, x) {
  if (x <= keys[0][0]) return keys[0][1];
  for (let i = 1; i < keys.length; i++) {
    if (x <= keys[i][0]) {
      const [x0, a] = keys[i - 1];
      const [x1, b] = keys[i];
      const t = (x - x0) / (x1 - x0);
      return a.map((v, j) => (Array.isArray(v) ? v.map((q, k) => q + (b[j][k] - q) * t) : v + (b[j] - v) * t));
    }
  }
  return keys[keys.length - 1][1];
}

const LEFT = [[70, 957, 980], [118, 930, 983], [166, 906, 978], [212, 885, 971], [259, 867, 965], [305, 846, 956], [349, 825, 948], [394, 789, 941], [438, 741, 932], [481, 715, 923], [523, 693, 914], [565, 672, 908], [607, 652, 899], [648, 632, 893], [688, 610, 888], [728, 583, 884], [766, 549, 879], [804, 508, 874], [843, 465, 869], [880, 420, 864], [918, 379, 861], [954, 343, 861], [990, 312, 869], [1025, 288, 872], [1061, 270, 872], [1096, 259, 868], [1130, 255, 861], [1164, 255, 854], [1198, 257, 845], [1231, 258, 834], [1264, 256, 822], [1296, 253, 808], [1328, 249, 795], [1360, 243, 779], [1391, 235, 762], [1421, 220, 745], [1451, 202, 729], [1482, 184, 713], [1512, 163, 705]];
/* bulge at 25, 50, 75 and 90 percent of a slice's height */
const LEFT_KEYS = [
  [60, [0, 0, 0, 0]], [640, [0, 1, 3, 1]], [766, [0, 1, 4, 3]], [843, [2, 5, 9, 7]], [918, [6, 12, 17, 9]],
  [1025, [9, 18, 19, 5]], [1130, [9, 18, 15, 4]], [1200, [7, 12, 8, 3]], [1296, [7, 12, 6, 2]],
  [1391, [11, 18, 12, 4]], [1451, [15, 24, 22, 7]], [1530, [17, 28, 30, 12]],
];
const MID = [[74, 380, 932], [108, 352, 914], [142, 324, 889], [176, 324, 856], [208, 324, 800], [240, 240, 747], [270, 207, 705], [302, 178, 683], [334, 151, 665], [365, 125, 657], [395, 102, 655], [426, 81, 655], [457, 66, 668], [486, 57, 688], [515, 54, 706]];
/* ribbon points below each top: [dx, y] */
const MID_KEYS = [
  [74, [[12, 480], [26, 600], [32, 690], [25, 760], [29, 820], [14, 890]]],
  [142, [[12, 440], [34, 550], [26, 620], [27, 700], [30, 780], [16, 850]]],
  [208, [[14, 400], [38, 505], [24, 575], [32, 650], [30, 710], [14, 765]]],
  [270, [[14, 350], [48, 490], [24, 560], [28, 610], [22, 650], [8, 685]]],
  [334, [[12, 310], [56, 480], [30, 550], [34, 590], [22, 625], [6, 650]]],
  [426, [[12, 280], [28, 400], [62, 485], [42, 560], [40, 600], [14, 640]]],
  [486, [[14, 260], [30, 400], [84, 500], [84, 570], [76, 605], [30, 655]]],
  [515, [[14, 260], [32, 400], [104, 505], [112, 570], [106, 605], [42, 665]]],
];
const BACK = [[548, 57], [578, 60], [606, 66], [635, 75], [662, 91], [690, 111], [716, 140], [743, 171], [769, 201], [795, 230], [822, 252], [847, 269], [873, 281], [898, 291], [924, 297], [948, 301], [972, 306], [997, 309], [1020, 310], [1045, 311], [1067, 312], [1090, 314], [1114, 314], [1138, 312]];
const WING = [[1157, 305], [1180, 296], [1202, 282], [1225, 264], [1247, 243], [1269, 222], [1290, 200], [1311, 182], [1332, 165], [1352, 150]];
const FEET = [[540, 718], [565, 728], [595, 733], [625, 738], [655, 740], [682, 742], [708, 748], [735, 752], [762, 756], [790, 762], [815, 772], [842, 780], [868, 787], [893, 795], [920, 803], [945, 812], [968, 822], [992, 832], [1015, 845], [1040, 862], [1062, 880], [1085, 898], [1108, 918], [1132, 942]];
const FRONT = [[82, 1058, 1088], [115, 1035, 1084], [150, 1008, 1080], [182, 978, 1076], [213, 945, 1074], [245, 909, 1070], [277, 873, 1065], [309, 834, 1060], [340, 794, 1054], [372, 783, 1049], [402, 807, 1046], [431, 816, 1043], [460, 828, 1042], [490, 837, 1040], [519, 846, 1034], [547, 861, 1030], [575, 870, 1028], [604, 876, 1022], [632, 887, 1019], [659, 894, 1015], [687, 897, 1011], [714, 900, 1009], [741, 905, 1006], [767, 915, 1002], [795, 927, 1000], [820, 938, 996], [847, 951, 991], [871, 966, 986]];
const SWEEPS = 9;
const SWEEP_A = [[1350, 488], [1378, 550], [1384, 608], [1310, 668], [1240, 745], [1185, 850], [1150, 940]];
const SWEEP_B = [[1435, 482], [1460, 520], [1474, 590], [1430, 665], [1392, 740], [1362, 840], [1350, 925]];

function backPath([x, y]) {
  const m = x < 950 ? 22 : 22 + (x - 950) * 0.12;
  const h = 478 - y;
  return smooth([[x, y], [x + m * 0.4, y + h * 0.35], [x + m, y + h * 0.75], [x + m + 12, y + h * 0.93], [x + m + 40, 494]]);
}

function Model() {
  const left = LEFT.map(([x, t, b]) => {
    const k = lerpKeys(LEFT_KEYS, x);
    const h = b - t;
    const pts = [[x, t], [x + k[0], t + h * 0.25], [x + k[1], t + h * 0.5], [x + k[2], t + h * 0.75], [x + k[3], t + h * 0.9], [x, b]];
    return { d: smooth(pts), x, t, b };
  });
  const mid = MID.map(([x, t, b]) => {
    const k = lerpKeys(MID_KEYS, x).map(([dx, y]) => [x + dx, y]);
    const bx = x > 440 ? x - (x - 440) * 0.1 : x;
    return { d: smooth([[x, t], ...k, [bx, b]]), x, t, b, bx };
  });
  return (
    <>
      <defs>
        <linearGradient id="edge" gradientUnits="userSpaceOnUse" x1="0" y1="240" x2="0" y2="960">
          <stop offset="0" stopColor="#cfcfcf" />
          <stop offset="0.5" stopColor="#bdbdbd" />
          <stop offset="0.75" stopColor="#b4b4b4" />
          <stop offset="1" stopColor="#999999" />
        </linearGradient>
        <linearGradient id="edge2" gradientUnits="userSpaceOnUse" x1="0" y1="60" x2="0" y2="900">
          <stop offset="0" stopColor="#bdbdbd" />
          <stop offset="0.4" stopColor="#9a9a9a" />
          <stop offset="0.52" stopColor="#828282" />
          <stop offset="0.7" stopColor="#7c7c7c" />
          <stop offset="1" stopColor="#a2a2a2" />
        </linearGradient>
        <linearGradient id="face" x1="0" y1="0" x2="0" y2="1">
          <stop offset="0" stopColor="#8a8a8a" />
          <stop offset="0.25" stopColor="#3c3c3c" />
          <stop offset="0.55" stopColor="#171717" />
          <stop offset="0.8" stopColor="#2e2e2e" />
          <stop offset="1" stopColor="#8a8a8a" />
        </linearGradient>
        <linearGradient id="face2" x1="0" y1="0" x2="0" y2="1">
          <stop offset="0" stopColor="#7c7c7c" />
          <stop offset="0.4" stopColor="#444444" />
          <stop offset="0.75" stopColor="#202020" />
          <stop offset="1" stopColor="#4d4d4d" />
        </linearGradient>
        <linearGradient id="wing" x1="0" y1="0" x2="1" y2="0">
          <stop offset="0" stopColor="#3a3a3a" />
          <stop offset="1" stopColor="#6a6a6a" />
        </linearGradient>
        <linearGradient id="back" gradientUnits="userSpaceOnUse" x1="0" y1="50" x2="0" y2="500">
          <stop offset="0" stopColor="#acacac" />
          <stop offset="0.7" stopColor="#8c8c8c" />
          <stop offset="0.85" stopColor="#727272" />
          <stop offset="1" stopColor="#a5a5a5" />
        </linearGradient>
        <linearGradient id="leg" gradientUnits="userSpaceOnUse" x1="0" y1="570" x2="0" y2="900">
          <stop offset="0" stopColor="#989898" />
          <stop offset="0.5" stopColor="#848484" />
          <stop offset="1" stopColor="#727272" />
        </linearGradient>
        <linearGradient id="panel" x1="0" y1="0" x2="1" y2="0.300">
          <stop offset="0" stopColor="#4a4a4a" />
          <stop offset="1" stopColor="#858585" />
        </linearGradient>
        <linearGradient id="round" x1="0" y1="0" x2="1" y2="0">
          <stop offset="0" stopColor="#5e5e5e" />
          <stop offset="0.5" stopColor="#a2a2a2" />
          <stop offset="1" stopColor="#8c8c8c" />
        </linearGradient>
      </defs>

      <g transform="translate(180 500) scale(0.4464 0.3333)" fill="none">
        {left.slice().reverse().map((f) => (
          <g key={f.x}>
            {f.x > 780 && <path d={`${f.d}L${f.x - 5} ${f.b - 10}L${f.x - 5} ${f.t + 10}Z`} fill="url(#face)" />}
            {f.x > 640 && f.x <= 780 && <path d={`M${f.x - 6} ${f.t}V${f.b}`} stroke="#777" strokeWidth="2" strokeDasharray="3 4" />}
            <path d={f.d} stroke="url(#edge)" strokeWidth={f.x < 640 ? 15 : 11} />
          </g>
        ))}
      </g>

      <g transform="translate(840 420) scale(0.3827 0.3333)" fill="none">
        {/* lower legs */}
        <path d="M560 480L660 520L1190 565L1150 660L1130 920L1060 865L960 808L800 755L700 734L600 722L530 700L540 640Z" fill="#3d3d3d" />
        {FEET.map(([x, y], i) => {
          const sx = 648 + i * 24;
          const sy = 586 - i * 0.7;
          const h = y - sy;
          return <path key={x} d={smooth([[sx, sy], [sx - (sx - x) * 0.55, sy + h * 0.25], [x + (sx - x) * 0.12, sy + h * 0.6], [x, y]])} stroke="url(#leg)" strokeWidth="17" />;
        })}
        {/* inner panel */}
        <path d="M1185 567L1355 540L1378 575L1380 612L1305 668L1240 742L1190 830L1147 938L1132 850L1136 700L1156 610Z" fill="url(#panel)" />
        {/* curled right end */}
        <path d="M1300 470L1440 480L1465 512L1480 590L1440 662L1398 745L1368 840L1356 925L1150 942L1185 850L1240 745L1310 668L1384 608L1366 552L1330 530Z" fill="#474747" />
        {Array.from({ length: SWEEPS }, (_, k) => {
          const t = k / (SWEEPS - 1);
          const pts = SWEEP_A.map(([x, y], j) => [x + (SWEEP_B[j][0] - x) * t, y + (SWEEP_B[j][1] - y) * t]);
          return <path key={k} d={smooth(pts)} stroke={k % 2 ? "#848484" : "#989898"} strokeWidth={k === 0 ? 14 : 8} />;
        })}
        {/* seat top */}
        <path d="M540 440L700 480L900 470L1200 462L1430 470L1440 484L1360 498L1000 512L760 522L640 518Z" fill="#454545" />
        {Array.from({ length: 31 }, (_, i) => {
          const x = 640 + i * 25;
          const y = 500 - i * 0.6;
          return <path key={i} d={`M${x - 14} ${y - 6}L${x + 14} ${y + 8}`} stroke="#959595" strokeWidth="9" />;
        })}
        {/* backrest */}
        {BACK.map((p) => (
          <path key={p[0]} d={backPath(p)} stroke="#303030" strokeWidth="20" transform="translate(9 6)" />
        ))}
        {BACK.map((p) => (
          <path key={p[0]} d={backPath(p)} stroke="url(#back)" strokeWidth="18" />
        ))}
        {WING.map(([x, y], i) => {
          const ex = 1228 + i * 17;
          const mx = x + 34;
          const h = 476 - y;
          const d = smooth([[x, y], [x + 22, y + h * 0.15], [mx, y + h * 0.42], [Math.min(mx + 5, ex + 10), y + h * 0.8], [ex, 476]]);
          return { d, x, y, h, ex };
        }).reverse().map(({ d, x, y, h, ex }) => (
          <g key={x}>
            <path d={`${d}L${ex - 26} 476L${x + 10} ${y + h * 0.7}L${x - 5} ${y + h * 0.3}Z`} fill="url(#wing)" />
            <path d={d} stroke="#999999" strokeWidth="6" />
            <path d={d} stroke="#1f1f1f" strokeWidth="3" transform="translate(5 0)" />
          </g>
        ))}
        {/* seat front band */}
        <path d="M600 508L750 516L1000 506L1345 490L1358 556L1180 568L1000 579L750 586L600 580Z" fill="#383838" />
        <path d="M634 513h48q12 34 4 70l-50-6z" fill="url(#round)" />
        <path d="M698 515h46q12 34 2 70l-50-4q-8-34 2-66z" fill="url(#round)" />
        {Array.from({ length: 23 }, (_, i) => {
          const x = 775 + i * 25;
          return <path key={i} d={`M${x - 3} ${516 - i * 1.1}q8 34 3 ${68 - i * 0.2}`} stroke={i < 2 ? "#a5a5a5" : "#b4b4b4"} strokeWidth="18" />;
        })}
        {/* left and middle slices */}
        <path d="M556 200Q560 430 630 505L634 604L548 668L500 704L520 500Z" fill="#6a6a6a" />
        <path d="M552 58Q548 430 626 505Q640 555 628 602L514 704" stroke="#8f8f8f" strokeWidth="9" />
        {mid.slice().reverse().map((f) => (
          <g key={f.x}>
            <path d={`${f.d}L${f.bx - 5} ${f.b - 12}L${f.x - 5} ${f.t + 12}Z`} fill="url(#face2)" />
            <path d={f.d} stroke="url(#edge2)" strokeWidth={f.x > 380 ? 11 : 10} />
          </g>
        ))}
        {/* small front slices */}
        {FRONT.map(([x, t, b]) => {
          const k = x < 200 ? 2 : x < 430 ? 7 : 12;
          const h = b - t;
          const d = smooth([[x, t], [x + k * 0.5, t + h * 0.4], [x + k, t + h * 0.8], [x + k * 0.8, b]]);
          return (
            <g key={x}>
              {x > 200 && x !== 402 && <path d={`${d}L${x - 5} ${b - 4}L${x - 5} ${t + 8}Z`} fill={x < 430 ? "#666666" : "#303030"} />}
              <path d={d} stroke="#a9a9a9" strokeWidth={x < 300 ? 13 : 10} />
            </g>
          );
        })}
      </g>
    </>
  );
}

function Viewport() {
  return (
    <div className="relative min-h-0 flex-1 overflow-hidden border border-[#bfc2cb] bg-white">
      <svg viewBox="61 223 1574 664" preserveAspectRatio="xMinYMin slice" className="block h-full w-full" role="img" aria-label="Perspective view of the slatted bench model">
        <g stroke="#2a2a9c" strokeWidth="1.200" fill="none">
          <path d="M146.500 223L156.500 861L1360 727V716" />
          <path d="M1270 223L1365.500 239L1363 475" />
          <path d="M1007 636V742" />
          <path d="M1635 285.600L1483.500 259.600L1477 714L1635 697M1561 273L1555 706" />
        </g>
        <Model />
        <path d="M365 223L368.500 525L928.500 527V253L695 223Z" fill="#fff" stroke="none" />
        <path d="M365 223L368.500 525L928.500 527V253L695 223" fill="none" stroke="#2a2a9c" strokeWidth="1.300" />
        <text x="616" y="454" transform="rotate(1 616 454)" fontSize="45" fill="#0d12bd" fontFamily="'Liberation Sans', Arial, sans-serif">Window</text>
        <text x="1586" y="483" fontSize="18" fill="#0d12bd" fontFamily="'Liberation Sans', Arial, sans-serif">Door</text>
      </svg>
      <button type="button" className="absolute left-0 top-0 flex h-[18px] items-center rounded-br bg-[#8c9fe9] text-[11px] font-bold text-[#1d2a63]">
        <span className="px-[7px]">Perspective</span>
        <span className="flex h-4 w-3 items-center justify-center border-l border-[#1d2a63]">
          <svg viewBox="0 0 8 5" className="w-2" aria-hidden="true"><path d="M0 0h8L4 5z" fill="#16204f" /></svg>
        </span>
      </button>
    </div>
  );
}

/* ---------- layers panel ---------- */
const LAYERS = [
  { name: "Outline", current: true, color: "bg-black" },
  { name: "Slices", color: "bg-black" },
  { name: "Layout Wall", color: "bg-[#0505f5]" },
  { name: "engraving", color: "bg-[#e31212]", locked: true },
];

function LayersPanel() {
  return (
    <aside aria-label="Layers" className="mb-[2px] ml-[7px] mt-1 flex w-[257px] shrink-0 flex-col">
      <div className="flex h-[14px] items-center gap-1 pl-[3px] text-[11px] text-[#30323a]">
        <h2>Layers</h2>
        <span className="h-[3px] flex-1 border-y border-[#cdd0da]" />
      </div>
      <div role="tablist" className="flex h-[22px] items-end overflow-hidden">
        {["wheel", "layer", "bomb", "tube", "open", "winhelp", "bell", "cog"].map((n, i) => (
          <button
            key={n}
            type="button"
            role="tab"
            aria-label={n}
            aria-selected={i === 1}
            className={`flex h-[22px] shrink-0 items-center justify-center pt-1 ${i === 1 ? "w-[34px] border-x border-t border-[#b9bfd3]" : i === 0 ? "w-[33px] border-b border-[#b9bfd3]" : "w-[35px] border-b border-[#b9bfd3]"}`}
          >
            <Icon n={n} size="size-4" />
          </button>
        ))}
      </div>
      <div className="flex min-h-0 flex-1 flex-col overflow-hidden border-b border-l border-[#bfc2cb]">
        <div role="toolbar" aria-label="Layer tools" className="flex h-[34px] shrink-0 items-center border-b border-[#c6c9d2] pl-[5px] pt-1">
          {["new", "copyg", "xg", "up", "down", "left", "funnelb", "pageg", "hammer", "help"].map((n, i) => (
            <button key={n} type="button" aria-label={n} className="flex h-6 w-[23px] items-center justify-center">
              <Icon n={n} size={n === "up" || n === "down" || n === "left" ? "size-[14px]" : "size-4"} fly={i > 5 && i < 9} />
            </button>
          ))}
        </div>
        <div className="min-h-0 flex-1 bg-white">
          <table className="w-full table-fixed border-collapse text-left text-[11px] text-[#2c2e33]">
            <thead>
              <tr className="h-[25px]">
                <th className="w-[112px] pl-[5px] font-normal">Layer</th>
                <th className="w-[23px] border-l border-[#dcdde2] pl-1 font-normal">C..</th>
                <th className="w-[17px] border-l border-[#dcdde2]" aria-label="On" />
                <th className="w-[17px] border-l border-[#dcdde2]" aria-label="Lock" />
                <th className="w-[17px] border-l border-[#dcdde2]" aria-label="Color" />
                <th className="w-[66px] border-l border-[#dcdde2] pl-[5px] font-normal">Material</th>
                <th className="border-l border-[#dcdde2]" aria-label="Linetype" />
              </tr>
            </thead>
            <tbody>
              {LAYERS.map((l) => (
                <tr key={l.name} className={`h-[19px] border-b border-[#ececf0] ${l.current ? "font-bold" : ""}`}>
                  <td className="pl-2 leading-4">{l.name}</td>
                  <td className="leading-4">
                    {l.current && (
                      <svg viewBox="0 0 14 11" className="mx-auto w-[14px]" aria-label="Current"><path d="M1 6l4 4 8-9" fill="none" stroke="#111" strokeWidth="1.600" /></svg>
                    )}
                  </td>
                  <td>
                    {!l.current && (
                      <svg viewBox="0 0 10 13" className="mx-auto h-[13px]" aria-label="On">
                        <path d="M3 9c0-2-2-2.500-2-5a4 4 0 0 1 8 0c0 2.500-2 3-2 5z" fill="#fbf08a" stroke="#3d3a1a" strokeWidth="0.900" />
                        <path d="M3.500 9.500h3v2l-1.500 1-1.500-1z" fill="#555" />
                      </svg>
                    )}
                  </td>
                  <td>
                    {!l.current && (
                      <svg viewBox="0 0 13 13" className="mx-auto h-[13px]" aria-label={l.locked ? "Locked" : "Unlocked"}>
                        <path d={l.locked ? "M4 6V4c0-4 5-4 5 0v2" : "M8 6V3c0-2.500 4-2.500 4 0v1.500"} fill="none" stroke="#222" strokeWidth="1.200" />
                        <rect x={l.locked ? 2.5 : 1} y="6" width="8" height="6.500" fill={l.locked ? "#6a8fd8" : "#f6de5a"} stroke="#3d3a1a" strokeWidth="0.900" />
                      </svg>
                    )}
                  </td>
                  <td>
                    <span className={`mx-auto block size-3 border border-[#444] ${l.color}`} />
                  </td>
                  <td />
                  <td />
                </tr>
              ))}
            </tbody>
          </table>
        </div>
        <div className="flex h-4 shrink-0 items-center bg-[#efeff0] pl-[17px]">
          <span className="h-0.5 w-[145px] bg-[#858585]" />
        </div>
      </div>
    </aside>
  );
}

/* ---------- bottom bars ---------- */
const OSNAPS = [["End", 1], ["Near", 1], ["Point", 1], ["Mid", 1], ["Cen", 1], ["Int", 1], ["Perp", 0], ["Tan", 1], ["Quad", 1], ["Knot", 0], ["Vertex", 1]];

function Osnap({ label, on }) {
  return (
    <label className="flex items-center gap-[3px]">
      <span className="grid size-[13px] place-items-center">
        <input type="checkbox" defaultChecked={!!on} className="peer col-start-1 row-start-1 size-[13px] appearance-none rounded-[3px] border border-[#62646a] bg-[#f6f6f8] checked:border-[#0a5fb4] checked:bg-[#0a5fb4]" />
        <svg viewBox="0 0 12 12" className="pointer-events-none invisible col-start-1 row-start-1 size-[11px] peer-checked:visible" aria-hidden="true">
          <path d="M2.500 6.500l2.300 2.300L9.500 3.500" fill="none" stroke="#d5e6fa" strokeWidth="1.200" />
        </svg>
      </span>
      {label}
    </label>
  );
}

function StatusCell({ children, on, className = "" }) {
  return (
    <button type="button" aria-pressed={!!on} className={`flex shrink-0 items-center justify-center whitespace-nowrap border-r border-[#c3c6d4] ${on ? "bg-[#d2d9ec] font-bold text-[#232a42]" : ""} ${className}`}>
      {children}
    </button>
  );
}

const MENUS = ["File", "Edit", "View", "Curve", "Surface", "SubD", "Solid", "Mesh", "Dimension", "Transform", "Tools", "Analyze", "Render", "Panels", "V-Ray", "Help"];
const TABS = ["Standard", "CPlanes", "Set View", "Display", "Select", "Viewport Layout", "Visibility", "Transform", "Curve Tools", "Surface Tools", "Solid Tools", "Render Tools", "Drafting", "New in V7"];

export default function App() {
  return (
    <div className="flex h-screen min-h-[700px] flex-col overflow-hidden bg-[#e9ebef] font-['Noto_Sans','Open_Sans',sans-serif] text-[11px] text-[#1c1d21]">
      <Defs />
      <nav aria-label="Main menu" className="flex h-[15px] shrink-0 items-center overflow-hidden bg-white">
        <div className="-ml-[3px] flex gap-[14px] leading-[14px]">
          {MENUS.map((m) => (
            <button key={m} type="button">{m}</button>
          ))}
        </div>
      </nav>

      <section aria-label="Command history" className="mt-[5px] flex h-[39px] shrink-0 border-b border-[#bfc2c9]">
        <div className="flex flex-1 flex-col justify-end overflow-hidden bg-white">
          <div className="-ml-[3px] whitespace-pre leading-[15px]">
            <p>Error reading the animation properties</p>
            <p>Successfully read file "C:\Users\tonii\Desktop\projects\2023\Lir- wall\Lir_3D-Model + Cutting Files (FINAL).3dm"</p>
            <p>Command: _RenderedViewport</p>
          </div>
        </div>
        <div className="w-2 bg-[#efeff0]" />
      </section>
      <div className="flex h-[18px] shrink-0 items-center bg-white">
        <label htmlFor="cmd" className="-ml-[3px] font-bold leading-4">Command:</label>
        <span className="ml-1 h-[14px] w-px bg-black" />
        <input id="cmd" type="text" className="h-4 flex-1 bg-transparent outline-none" />
        <div className="flex w-2 flex-col items-center gap-1 overflow-hidden bg-[#efeff0]">
          <svg viewBox="0 0 8 5" className="w-2" aria-hidden="true"><path d="M0 5h8L4 0z" fill="#222" /></svg>
          <svg viewBox="0 0 8 5" className="w-2" aria-hidden="true"><path d="M0 0h8L4 5z" fill="#222" /></svg>
        </div>
      </div>

      <div className="mt-[3px] flex h-[22px] shrink-0 items-end border-t border-[#d6d8e0] text-[#3b3d45]">
        <div role="tablist" className="flex h-4">
          {TABS.map((t, i) => (
            <button
              key={t}
              type="button"
              role="tab"
              aria-selected={i === 0}
              className={`whitespace-nowrap leading-4 ${i === 0 ? "rounded-tr border-r border-t border-[#c0c4d4] pl-[6px] pr-2" : "border-b border-[#c0c4d4] px-[11px]"}`}
            >
              {t}
            </button>
          ))}
        </div>
        <div className="h-4 flex-1 border-b border-[#c0c4d4]" />
        <div className="h-4 w-[7px] overflow-hidden border-b border-[#c0c4d4]">
          <Icon n="cog" size="size-3" />
        </div>
      </div>
      <ToolRow items={ROW1} label="Standard tools" className="h-[43px] shrink-0 pb-3" />
      <ToolRow items={ROW2} label="SubD tools" className="h-[37px] shrink-0" />
      <div className="h-[40px] shrink-0">
        <ToolRow items={ROW3} label="Mesh tools" className="h-[37px]" />
      </div>

      <main className="flex min-h-0 flex-1">
        <div className="mr-[7px] w-[53px] shrink-0 overflow-hidden">
          <div className="mt-[3px] h-[3px] border-y border-[#cdd0da]" />
          <div role="toolbar" aria-label="Modelling tools" className="-ml-[10px] mt-px grid h-[506px] w-14 grid-cols-2 grid-rows-[repeat(18,minmax(0,1fr))]">
            {SIDE.map((t, i) => (
              <Tool key={i} name={t} />
            ))}
          </div>
        </div>
        <div className="flex min-w-0 flex-1 flex-col">
          <Viewport />
          <div role="tablist" aria-label="Viewports" className="flex h-[20px] shrink-0 items-center">
            <button type="button" role="tab" aria-selected="true" className="h-full rounded-bl-lg rounded-br border-x border-b border-[#bfc2cb] pl-2 pr-1">Perspective</button>
            <button type="button" role="tab" aria-selected="false" className="px-[9px]">Top</button>
            <button type="button" role="tab" aria-selected="false" className="px-[7px]">Front</button>
            <button type="button" role="tab" aria-selected="false" className="px-2">Right</button>
            <button type="button" aria-label="Add viewport" className="px-[6px]">
              <svg viewBox="0 0 10 10" className="size-[10px]" aria-hidden="true"><path d="M3.500 0.500h3v3h3v3h-3v3h-3v-3h-3v-3h3z" fill="#f4f4f6" stroke="#888" /></svg>
            </button>
          </div>
        </div>
        <LayersPanel />
      </main>

      <fieldset aria-label="Object snaps" className="-ml-0.5 mt-2 flex h-[18px] shrink-0 items-center gap-[7px]">
        {OSNAPS.map(([l, on]) => (
          <Osnap key={l} label={l} on={on} />
        ))}
        {["Project", "Disable"].map((l) => (
          <label key={l} className="mr-2 flex items-center gap-1">
            <input type="radio" name="snapmode" className="size-[11px] appearance-none rounded-full border border-[#c4c6cc] bg-white" />
            {l}
          </label>
        ))}
      </fieldset>

      <footer className="mt-[52px] flex h-[22px] shrink-0 border-b-2 border-t border-b-[#1b1b1d] border-t-[#c3c6d4] text-[#34363d]">
        <StatusCell className="-ml-[6px] w-[45px]">CPlane</StatusCell>
        <StatusCell className="w-[88px]">x -1432.26</StatusCell>
        <StatusCell className="w-[88px]">y 5232.40</StatusCell>
        <StatusCell className="w-[88px]">z 0</StatusCell>
        <StatusCell className="w-[88px]">Millimeters</StatusCell>
        <StatusCell className="w-[168px] gap-[3px] pl-[3px]">
          <span className="size-[13px] bg-black" />
          <span className="flex-1 text-left">Outline</span>
        </StatusCell>
        <StatusCell className="w-[65px]">Grid Snap</StatusCell>
        <StatusCell on className="w-[45px]">Ortho</StatusCell>
        <StatusCell on className="w-[48px]">Planar</StatusCell>
        <StatusCell on className="w-[48px]">Osnap</StatusCell>
        <StatusCell on className="w-[74px]">SmartTrack</StatusCell>
        <StatusCell on className="w-[59px]">Gumball</StatusCell>
        <StatusCell className="w-[92px]">Record History</StatusCell>
        <StatusCell className="w-[40px]">Filter</StatusCell>
        <span className="flex items-center pl-px">Minutes from last save: 1</span>
      </footer>
    </div>
  );
}
